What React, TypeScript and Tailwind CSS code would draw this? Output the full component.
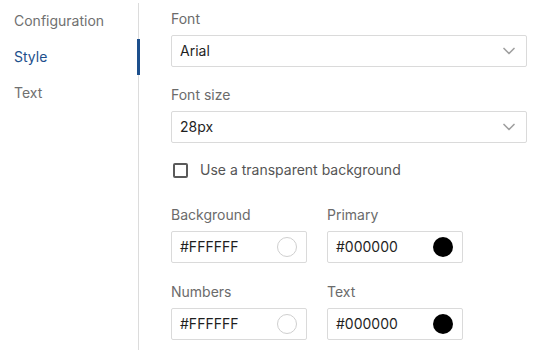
import { ChevronDown } from 'lucide-react';

const font = { fontFamily: 'Inter, "Noto Sans", sans-serif' };

function Select({ value }: { value: string }) {
  return (
    <div className="flex h-8 items-center justify-between rounded-[2px] border border-[#dadada] bg-white pl-2 pr-[7px]">
      <span className="text-sm text-[#1f1f1f]">{value}</span>
      <ChevronDown className="h-5 w-5 text-[#a0a0a0]" strokeWidth={2} />
    </div>
  );
}

function ColorField({ label, value, swatch }: { label: string; value: string; swatch: string }) {
  return (
    <div className="w-[136px]">
      <p className="h-5 text-sm leading-5 text-[#6b6b6b]">{label}</p>
      <div className="mt-[6px] flex h-8 items-center justify-between rounded-[2px] border border-[#dadada] bg-white pl-2 pr-[9px]">
        <span className="text-sm text-[#1f1f1f]">{value}</span>
        {swatch === 'white' ? (
          <span className="h-5 w-5 rounded-full border border-[#cfcfcf] bg-white" />
        ) : (
          <span className="h-5 w-5 rounded-full bg-black" />
        )}
      </div>
    </div>
  );
}

export default function App() {
  const tabs = ['Configuration', 'Style', 'Text'];
  return (
    <div className="h-[356px] w-[542px] bg-white" style={font}>
      <div className="flex pt-[3px]">
        <div className="h-[347px] w-[139px] shrink-0 border-r border-[#dcdcdc]">
          {tabs.map((t) => (
            <div key={t} className="relative flex h-9 items-center pl-[14px]">
              <span className={`text-sm ${t === 'Style' ? 'text-[#1d4f8c]' : 'text-[#707070]'}`}>{t}</span>
              {t === 'Style' && <span className="absolute right-[-2px] top-0 h-9 w-[3px] bg-[#1d4f8c]" />}
            </div>
          ))}
        </div>

        <div className="flex-1 pl-8 pr-[15px] pt-[6px]">
          <p className="h-5 text-sm leading-5 text-[#6b6b6b]">Font</p>
          <div className="mt-[6px]">
            <Select value="Arial" />
          </div>

          <p className="mt-[18px] h-5 text-sm leading-5 text-[#6b6b6b]">Font size</p>
          <div className="mt-[6px]">
            <Select value="28px" />
          </div>

          <label className="mt-[17px] flex h-5 items-center">
            <span className="ml-[2px] h-[15px] w-[15px] rounded-[2px] border-2 border-[#5a5a5a]" />
            <span className="ml-3 text-sm text-[#555]">Use a transparent background</span>
          </label>

          <div className="mt-[25px] flex gap-5">
            <ColorField label="Background" value="#FFFFFF" swatch="white" />
            <ColorField label="Primary" value="#000000" swatch="black" />
          </div>
          <div className="mt-[19px] flex gap-5">
            <ColorField label="Numbers" value="#FFFFFF" swatch="white" />
            <ColorField label="Text" value="#000000" swatch="black" />
          </div>
        </div>
      </div>
    </div>
  );
}
